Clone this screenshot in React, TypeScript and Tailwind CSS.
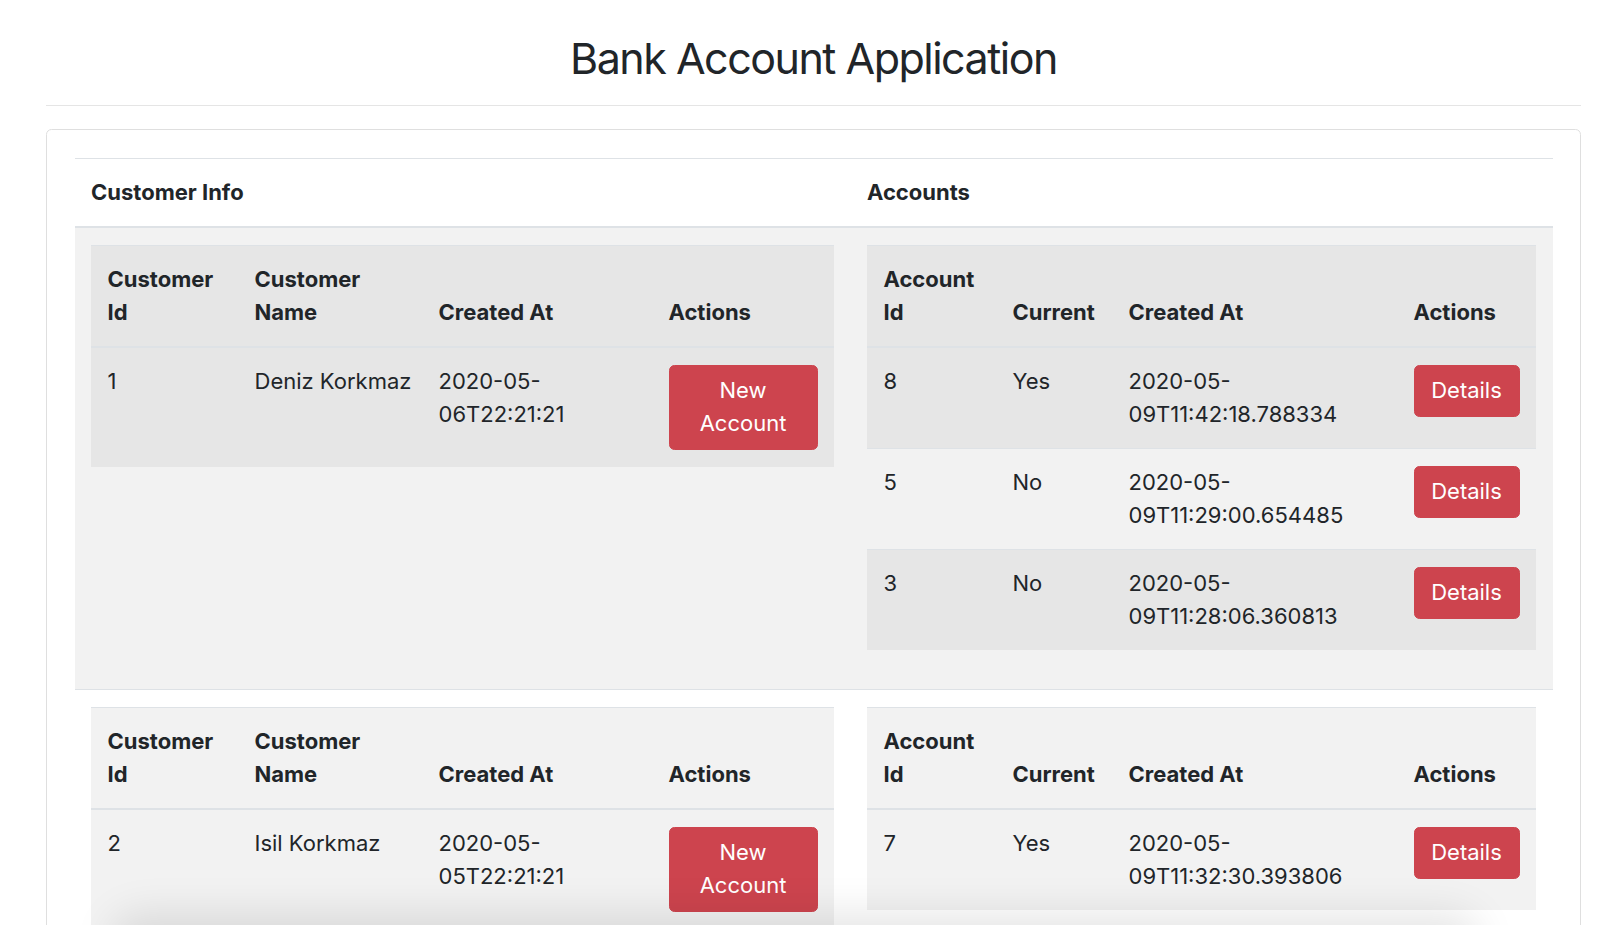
import React from "react";

type Customer = { id: number; name: string; day: string; time: string };
type Account = { id: number; current: string; day: string; time: string };

const groups: { customer: Customer; accounts: Account[] }[] = [
  {
    customer: { id: 1, name: "Deniz Korkmaz", day: "2020-05-", time: "06T22:21:21" },
    accounts: [
      { id: 8, current: "Yes", day: "2020-05-", time: "09T11:42:18.788334" },
      { id: 5, current: "No", day: "2020-05-", time: "09T11:29:00.654485" },
      { id: 3, current: "No", day: "2020-05-", time: "09T11:28:06.360813" },
    ],
  },
  {
    customer: { id: 2, name: "Isil Korkmaz", day: "2020-05-", time: "05T22:21:21" },
    accounts: [{ id: 7, current: "Yes", day: "2020-05-", time: "09T11:32:30.393806" }],
  },
];

const th = "border-t border-b-2 border-[#dee2e6] px-[16.5px] py-[17px] text-left align-bottom font-bold";
const td = "border-t border-[#dee2e6] px-[16.5px] py-[17px] align-top";

function RedButton({ label }: { label: string }) {
  return (
    <button className="block w-full rounded-[5.5px] border border-[#cd444e] bg-[#cd444e] px-[16.5px] py-[8.5px] text-center leading-[33px] text-white">
      {label}
    </button>
  );
}

// inner rows: odd rows get the stripe, the thead row counts as one too
function stripe(odd: boolean, outerOdd: boolean) {
  if (!odd) return "";
  return outerOdd ? "bg-[#e6e6e6]" : "bg-[#f2f2f2]";
}

function CustomerTable({ c, outerOdd }: { c: Customer; outerOdd: boolean }) {
  return (
    <table className="mb-[22px] w-full table-fixed border-collapse">
      <colgroup>
        <col className="w-[147px]" />
        <col className="w-[184px]" />
        <col className="w-[230px]" />
        <col />
      </colgroup>
      <thead>
        <tr className={stripe(true, outerOdd)}>
          <th className={th}>Customer Id</th>
          <th className={th}>Customer Name</th>
          <th className={th}>Created At</th>
          <th className={th}>Actions</th>
        </tr>
      </thead>
      <tbody>
        <tr className={stripe(true, outerOdd)}>
          <td className={td}>{c.id}</td>
          <td className={td + " whitespace-nowrap"}>{c.name}</td>
          <td className={td}>
            {c.day}
            <br />
            {c.time}
          </td>
          <td className={td}>
            <RedButton label="New Account" />
          </td>
        </tr>
      </tbody>
    </table>
  );
}

function AccountTable({ rows, outerOdd }: { rows: Account[]; outerOdd: boolean }) {
  return (
    <table className="mb-[22px] w-full table-fixed border-collapse">
      <colgroup>
        <col className="w-[129px]" />
        <col className="w-[116px]" />
        <col className="w-[285px]" />
        <col />
      </colgroup>
      <thead>
        <tr className={stripe(true, outerOdd)}>
          <th className={th}>Account Id</th>
          <th className={th}>Current</th>
          <th className={th}>Created At</th>
          <th className={th}>Actions</th>
        </tr>
      </thead>
      <tbody>
        {rows.map((a, i) => (
          <tr key={a.id} className={stripe(i % 2 === 0, outerOdd)}>
            <td className={td}>{a.id}</td>
            <td className={td}>{a.current}</td>
            <td className={td}>
              {a.day}
              <br />
              {a.time}
            </td>
            <td className={td}>
              <RedButton label="Details" />
            </td>
          </tr>
        ))}
      </tbody>
    </table>
  );
}

export default function App() {
  return (
    <main className="relative min-h-screen bg-white pl-[46px] pr-[19px] pt-[32px] font-['Inter',sans-serif] text-[22px] leading-[33px] text-[#212529]">
      <h2 className="text-center text-[43px] font-normal leading-[52.8px] tracking-[-0.035em]">
        Bank Account Application
      </h2>
      <hr className="mt-[20px] border-0 border-t border-[#e5e5e5]" />
      <div className="mt-[23.5px] rounded-[5.5px] border border-[#dfdfdf] p-[27.5px]">
        <table className="w-full table-fixed border-collapse">
          <colgroup>
            <col className="w-[776px]" />
            <col />
          </colgroup>
          <thead>
            <tr>
              <th className={th}>Customer Info</th>
              <th className={th}>Accounts</th>
            </tr>
          </thead>
          <tbody>
            {groups.map((g, i) => (
              <tr key={g.customer.id} className={i % 2 === 0 ? "bg-[#f2f2f2]" : ""}>
                <td className={td}>
                  <CustomerTable c={g.customer} outerOdd={i % 2 === 0} />
                </td>
                <td className={td}>
                  <AccountTable rows={g.accounts} outerOdd={i % 2 === 0} />
                </td>
              </tr>
            ))}
          </tbody>
        </table>
      </div>
      {/* soft shadow coming up from the bottom edge of the shot */}
      <div className="pointer-events-none fixed bottom-[-60px] left-[110px] right-[120px] h-[60px] rounded-[40px] shadow-[0_-12px_40px_rgba(0,0,0,0.10)]" />
    </main>
  );
}
